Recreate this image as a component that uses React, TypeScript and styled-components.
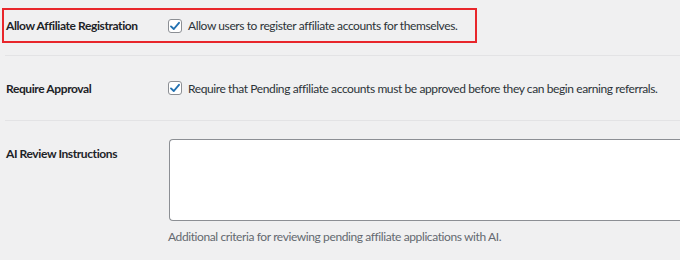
import styled, { createGlobalStyle } from 'styled-components';

const GlobalStyle = createGlobalStyle`
  html, body {
    margin: 0;
    padding: 0;
    background: #f0f0f1;
  }
  body {
    font-family: Lato, 'Noto Sans', sans-serif;
    font-size: 12px;
    letter-spacing: -0.4px;
    color: #1d2327;
  }
`;

const Page = styled.div`
  width: 680px;
  height: 260px;
  overflow: hidden;
  white-space: nowrap;
`;

const Row = styled.div<{ $divider?: boolean }>`
  display: grid;
  grid-template-columns: 162px 1fr;
  align-items: center;
  margin-left: 5px;
  padding-left: 1px;
  border-top: ${({ $divider }) => ($divider ? '1px solid #e3e3e5' : 'none')};
`;

const CheckRow = styled(Row)`
  height: 64px;
`;

const Highlight = styled.div`
  display: grid;
  grid-template-columns: 162px 1fr;
  align-items: center;
  margin: 8px 0 12px 2px;
  width: 469px;
  height: 31px;
  border: 2px solid #e8262b;
  padding-left: 2px;
`;

const FieldRow = styled(Row)`
  align-items: start;
  padding-top: 18px;
`;

const Label = styled.div<{ $offset?: number }>`
  font-weight: 700;
  color: #1d2327;
  padding-top: ${({ $offset }) => ($offset ? `${$offset}px` : '0')};
`;

const CheckLine = styled.label`
  display: flex;
  align-items: center;
  gap: 6px;
  color: #2c3338;
`;

const Box = styled.span`
  display: inline-flex;
  align-items: center;
  justify-content: center;
  width: 14px;
  height: 14px;
  box-sizing: border-box;
  border: 1px solid #8c8f94;
  border-radius: 3px;
  background: #fff;
  flex: none;
`;

const Field = styled.div`
  display: flex;
  flex-direction: column;
`;

const TextArea = styled.div`
  height: 82px;
  background: #fff;
  border: 1px solid #8c8f94;
  border-right: none;
  border-radius: 4px 0 0 4px;
  box-sizing: border-box;
  margin-left: 1px;
`;

const Help = styled.p`
  margin: 8px 0 0;
  color: #646970;
`;

const Checkbox = () => (
  <Box>
    <svg width="12" height="12" viewBox="0 0 12 12">
      <path d="M2 6.4 L4.8 9 L10 2.8" fill="none" stroke="#2271b1" strokeWidth="1.9" strokeLinecap="round" strokeLinejoin="round" />
    </svg>
  </Box>
);

export default function App() {
  return (
    <Page>
      <GlobalStyle />
      <Highlight>
        <Label>Allow Affiliate Registration</Label>
        <CheckLine>
          <Checkbox />
          Allow users to register affiliate accounts for themselves.
        </CheckLine>
      </Highlight>
      <CheckRow $divider>
        <Label>Require Approval</Label>
        <CheckLine>
          <Checkbox />
          Require that Pending affiliate accounts must be approved before they can begin earning referrals.
        </CheckLine>
      </CheckRow>
      <FieldRow $divider>
        <Label $offset={7}>AI Review Instructions</Label>
        <Field>
          <TextArea />
          <Help>Additional criteria for reviewing pending affiliate applications with AI.</Help>
        </Field>
      </FieldRow>
    </Page>
  );
}
